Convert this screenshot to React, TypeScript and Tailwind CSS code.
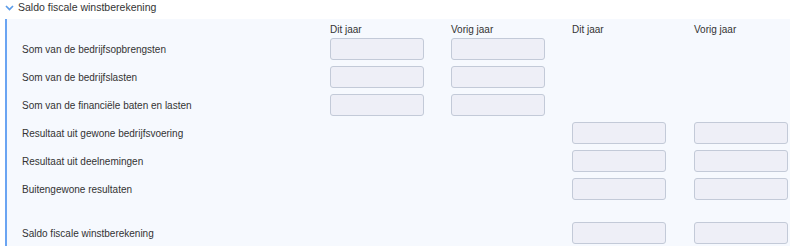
const rows = [
  { label: 'Som van de bedrijfsopbrengsten', left: true, right: false },
  { label: 'Som van de bedrijfslasten', left: true, right: false },
  { label: 'Som van de financiële baten en lasten', left: true, right: false },
  { label: 'Resultaat uit gewone bedrijfsvoering', left: false, right: true },
  { label: 'Resultaat uit deelnemingen', left: false, right: true },
  { label: 'Buitengewone resultaten', left: false, right: true },
]

const Box = () => (
  <div className="h-[22px] w-[94px] rounded-[3px] border border-[#c3cad8] bg-[#eeeff7]" />
)

const Empty = () => <div className="h-[22px] w-[94px]" />

const Row = ({ label, left, right }: { label: string; left: boolean; right: boolean }) => (
  <div className="grid grid-cols-[281px_94px_94px_94px_94px] gap-x-[27px] items-center">
    <span>{label}</span>
    {left ? <Box /> : <Empty />}
    {left ? <Box /> : <Empty />}
    {right ? <Box /> : <Empty />}
    <div className="ml-px">{right ? <Box /> : <Empty />}</div>
  </div>
)

export default function App() {
  return (
    <div className="w-[790px] h-[246px] overflow-hidden bg-white text-[10px] text-[#333] font-['Liberation_Sans',Arial,sans-serif]">
      {/* Section header */}
      <div className="flex items-center h-[19px] pl-[5px]">
        <svg width="9" height="6" viewBox="0 0 9 6" className="mr-[4px] mt-[-3px]">
          <path d="M1 1 L4.5 4.5 L8 1" fill="none" stroke="#5b9be8" strokeWidth="1.7" />
        </svg>
        <span className="text-[10.5px] leading-[13px] mt-[-4px]">Saldo fiscale winstberekening</span>
      </div>

      {/* Panel */}
      <div className="ml-[5px] border-l-2 border-[#6aa4f2] bg-[#f6f9fe] pl-[15px] pt-[4px] pb-[2px] h-[227px]">
        <div className="grid grid-cols-[281px_94px_94px_94px_94px] gap-x-[27px] h-[13px] leading-[13px]">
          <span />
          <span>Dit jaar</span>
          <span>Vorig jaar</span>
          <span>Dit jaar</span>
          <span className="ml-px">Vorig jaar</span>
        </div>
        <div className="mt-[2px] flex flex-col gap-[6px]">
          {rows.map((r) => (
            <Row key={r.label} {...r} />
          ))}
        </div>
        <div className="mt-[22px]">
          <Row label="Saldo fiscale winstberekening" left={false} right={true} />
        </div>
      </div>
    </div>
  )
}
